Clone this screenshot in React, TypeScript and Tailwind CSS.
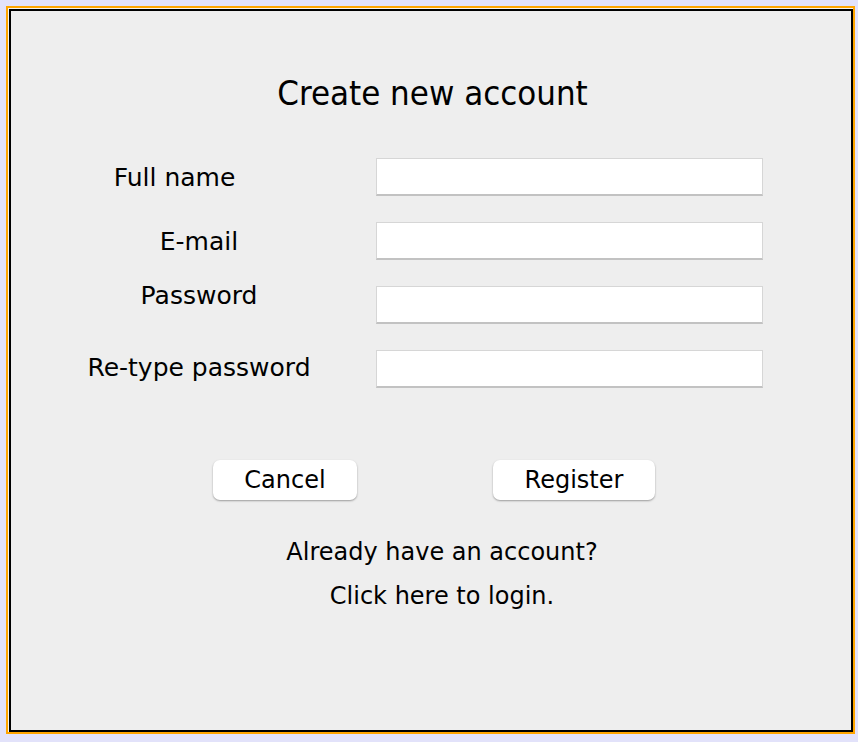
import React from "react";

const fieldRows = [
  { label: "Full name", labelClass: "pr-[49px] pt-[2px]" },
  { label: "E-mail", labelClass: "pt-[2px]" },
  { label: "Password", labelClass: "pb-[19px]" },
  { label: "Re-type password", labelClass: "pb-[3px]" },
];

function Field() {
  return (
    <div className="h-[38px] w-[387px] bg-white border border-[#d6d6d6] border-b-[#c2c2c2] border-b-2" />
  );
}

function Button({ children, width }: { children: React.ReactNode; width: string }) {
  return (
    <button
      className={`${width} h-[40px] bg-white rounded-[7px] shadow-[0_1px_2px_rgba(0,0,0,0.35)] text-[24px] text-black leading-none`}
    >
      {children}
    </button>
  );
}

export default function App() {
  return (
    <div className="w-[858px] h-[742px] bg-[#e2e2fa] pt-[6px] pl-[6px] pr-[3px] pb-[8px]">
      <div className="h-full border-2 border-[#ffa500] pl-px pt-px bg-[#f4f4f4]">
        <div
          className="h-full border-2 border-black bg-[#eeeeee] flex flex-col"
          style={{ fontFamily: '"DejaVu Sans", Verdana, sans-serif' }}
        >
          <h1
            className="mt-[62px] text-center text-[34.5px] leading-[40px] text-black pl-[3px]"
            style={{ fontFamily: '"DejaVu Sans Condensed", "DejaVu Sans", sans-serif' }}
          >
            Create new account
          </h1>

          <div className="mt-[45px] flex flex-col gap-[26px]">
            {fieldRows.map((row) => (
              <div key={row.label} className="flex items-center h-[38px]">
                <div className="ml-[75px] w-[226px] flex justify-center">
                  <span className={`text-[25px] leading-[30px] text-black whitespace-nowrap ${row.labelClass}`}>
                    {row.label}
                  </span>
                </div>
                <div className="ml-[64px]">
                  <Field />
                </div>
              </div>
            ))}
          </div>

          <div className="mt-[72px] flex pl-[202px] gap-[136px]">
            <Button width="w-[144px]">Cancel</Button>
            <Button width="w-[162px]">Register</Button>
          </div>

          <div className="mt-[30px] flex flex-col items-center text-[24px] leading-[44px] text-black pl-[22px]">
            <p>Already have an account?</p>
            <p>Click here to login.</p>
          </div>
        </div>
      </div>
    </div>
  );
}
